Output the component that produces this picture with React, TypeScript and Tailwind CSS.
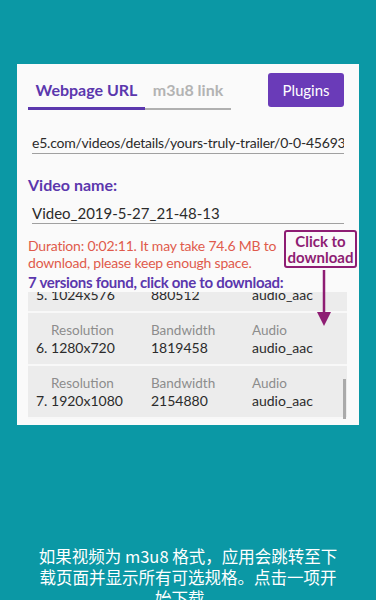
import React from "react";

const rows = [
  { n: "5. 1024x576", b: "880512", a: "audio_aac", h: "h-[56px]", first: true },
  { n: "6. 1280x720", b: "1819458", a: "audio_aac", h: "h-[53px]", first: false },
  { n: "7. 1920x1080", b: "2154880", a: "audio_aac", h: "h-[53px]", first: false },
];

export default function App() {
  return (
    <div
      className="w-[376px] h-[600px] overflow-hidden bg-[#0b98a5] pt-[64px]"
      style={{ fontFamily: "Lato, 'Noto Sans', sans-serif" }}
    >
      <div className="relative ml-[17px] w-[342px] bg-[#fafafa] pl-[11px] pr-[12px] pt-[9px] pb-[6px]">
        {/* tabs row */}
        <div className="flex justify-between items-start">
          <div className="flex flex-col">
            <div className="flex">
              <div className="w-[117px] h-[34px] flex items-center justify-center text-[16px] font-bold text-[#5b37ad]">
                Webpage URL
              </div>
              <div className="w-[86px] h-[34px] flex items-center justify-center text-[16px] font-bold text-[#b3b3b3]">
                m3u8 link
              </div>
            </div>
            <div className="flex items-end h-[3px]">
              <div className="w-[117px] h-[3px] bg-[#5b37ad]" />
              <div className="w-[86px] h-[2px] bg-[#b0b0b0]" />
            </div>
          </div>
          <div className="mr-[3px] w-[76px] h-[34px] rounded-[3px] bg-[#6a3bb8] text-white text-[15px] flex items-center justify-center">
            Plugins
          </div>
        </div>

        {/* url input */}
        <div className="ml-[4px] mr-[3px] mt-[23px] border-b border-[#a0a0a0] text-[14px] tracking-[-0.22px] leading-[20px] text-[#2b2b2b] whitespace-nowrap overflow-hidden">
          e5.com/videos/details/yours-truly-trailer/0-0-45693
        </div>

        <div className="mt-[21px] text-[16px] leading-[20px] font-bold text-[#5b37ad]">
          Video name:
        </div>

        <div className="ml-[4px] mr-[3px] mt-[8px] border-b border-[#a0a0a0] text-[15px] leading-[20px] text-[#2b2b2b] whitespace-nowrap">
          Video_2019-5-27_21-48-13
        </div>

        <div className="mt-[13px] text-[14px] tracking-[-0.2px] leading-[17px] text-[#e05a4c] whitespace-nowrap">
          Duration: 0:02:11. It may take 74.6 MB to
          <br />
          download, please keep enough space.
        </div>

        <div className="mt-[2px] text-[15px] tracking-[-0.3px] leading-[18px] font-bold text-[#5b37ad] whitespace-nowrap">
          7 versions found, click one to download:
        </div>

        {/* list */}
        <div className="relative mt-[1px] h-[127px] overflow-hidden bg-[#ececec]">
          <div className="mt-[-35px]">
            {rows.map((r) => (
              <div key={r.n} className={`${r.h} border-b-2 border-[#f8f8f8] flex flex-col justify-end pb-[7px]`}>
                {r.first ? (
                  <div className="h-[18px]" />
                ) : (
                  <div className="grid grid-cols-[123px_101px_1fr] text-[13.5px] leading-[18px] text-[#8c8c8c]">
                    <span className="pl-[23px]">Resolution</span>
                    <span>Bandwidth</span>
                    <span>Audio</span>
                  </div>
                )}
                <div className="grid grid-cols-[123px_101px_1fr] text-[14px] leading-[18px] text-[#2b2b2b]">
                  <span className="pl-[8px]">{r.n}</span>
                  <span>{r.b}</span>
                  <span>{r.a}</span>
                </div>
              </div>
            ))}
          </div>
          <div className="absolute right-[1px] top-[87px] w-[3px] h-[40px] bg-[#aaaaaa]" />
        </div>

        {/* callout */}
        <div className="absolute left-[267px] top-[166px] w-[73px] h-[38px] rounded-[3px] border-2 border-[#8e1d73] flex flex-col items-center justify-center text-[15px] leading-[16px] font-bold text-[#8e1d73]">
          <span>Click to</span>
          <span>download</span>
        </div>
        <svg
          className="absolute left-[299px] top-[206px]"
          width="16"
          height="58"
          viewBox="0 0 16 58"
        >
          <line x1="8" y1="0" x2="8" y2="46" stroke="#8e1d73" strokeWidth="2.5" />
          <polygon points="1,42 15,42 8,56" fill="#8e1d73" />
        </svg>
      </div>

      <div
        className="mt-[121px] mx-auto w-[310px] text-center text-white text-[16.5px] leading-[21px]"
        style={{ fontFamily: "'Noto Sans CJK SC', 'Noto Sans', sans-serif" }}
      >
        如果视频为 m3u8 格式，应用会跳转至下载页面并显示所有可选规格。点击一项开始下载。
      </div>
    </div>
  );
}
